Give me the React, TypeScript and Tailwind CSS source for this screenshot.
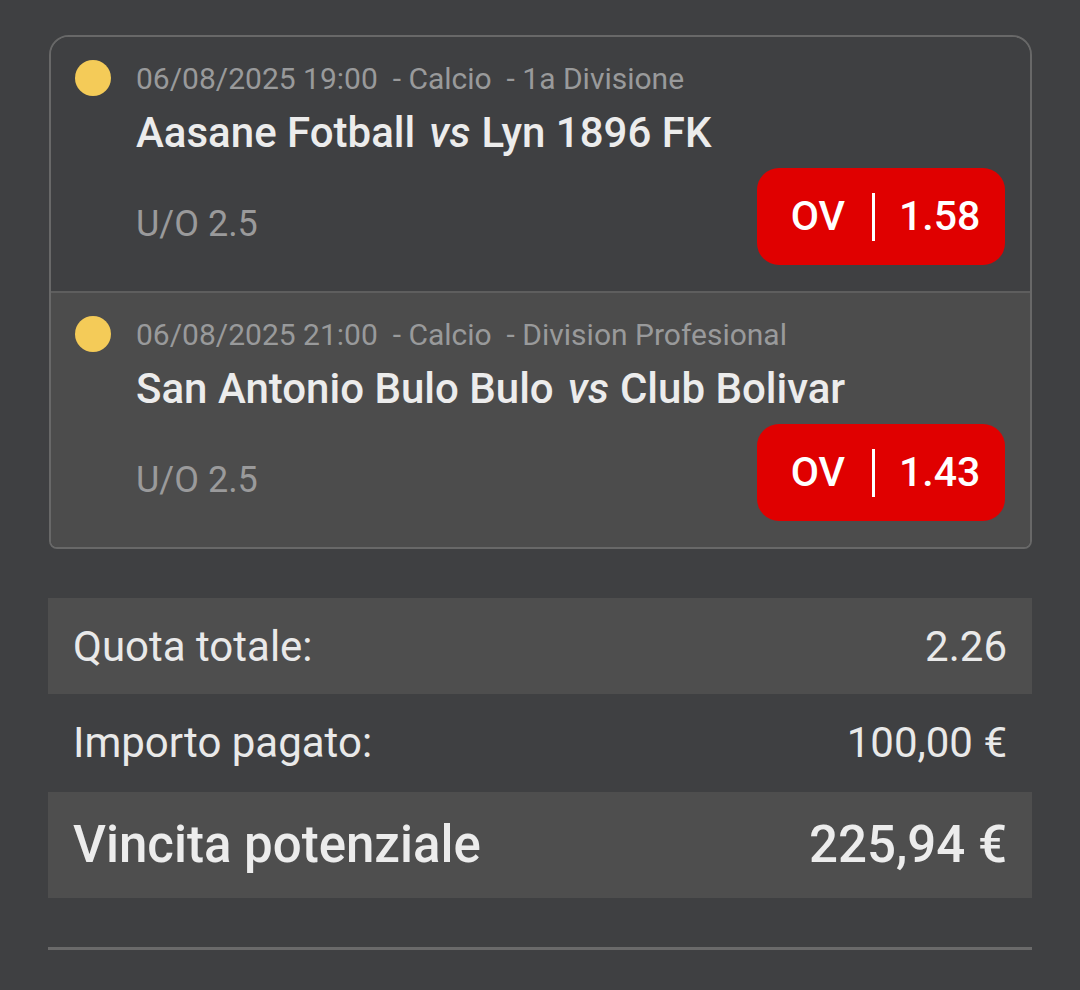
import React from "react";

type Bet = {
  date: string;
  sport: string;
  league: string;
  home: string;
  away: string;
  market: string;
  pick: string;
  odd: string;
};

const bets: Bet[] = [
  {
    date: "06/08/2025 19:00",
    sport: "Calcio",
    league: "1a Divisione",
    home: "Aasane Fotball",
    away: "Lyn 1896 FK",
    market: "U/O 2.5",
    pick: "OV",
    odd: "1.58",
  },
  {
    date: "06/08/2025 21:00",
    sport: "Calcio",
    league: "Division Profesional",
    home: "San Antonio Bulo Bulo",
    away: "Club Bolivar",
    market: "U/O 2.5",
    pick: "OV",
    odd: "1.43",
  },
];

const BetRow = ({ bet, alt }: { bet: Bet; alt: boolean }) => {
  return (
    <div
      className={`flex pl-[24px] pr-[25px] pt-[21px] pb-[26px] ${
        alt ? "bg-[#4c4c4c]" : "bg-[#3f4042]"
      }`}
    >
      <div className="flex h-[40px] w-[61px] shrink-0 items-center">
        <div className="h-[36px] w-[36px] rounded-full bg-[#f4cb58]" />
      </div>
      <div className="flex min-w-0 flex-1 flex-col">
        <div className="flex h-[40px] items-center whitespace-pre text-[30px] text-[#999a9b]">
          {bet.date}
          {"  - "}
          {bet.sport}
          {"  - "}
          {bet.league}
        </div>
        <div className="mt-[10px] flex h-[48px] items-center whitespace-pre text-[42px] font-medium text-[#ececec]">
          {bet.home}
          <span className="ml-[14px] mr-[11px] italic">vs</span>
          {bet.away}
        </div>
        <div className="mt-[12px] flex items-center justify-between">
          <div className="mt-[14px] text-[36px] text-[#9a9a9b]">{bet.market}</div>
          <div className="flex h-[97px] w-[248px] items-center justify-center rounded-[22px] bg-[#e00000] pl-[9px] text-[41px] font-medium text-white">
            <span>{bet.pick}</span>
            <span className="ml-[27px] mr-[24px] h-[48px] w-[3px] bg-white" />
            <span>{bet.odd}</span>
          </div>
        </div>
      </div>
    </div>
  );
};

const App = () => {
  return (
    <div
      className="min-h-[990px] bg-[#3f4042] px-[48px] pt-[35px]"
      style={{ fontFamily: "Roboto, 'Noto Sans', sans-serif" }}
    >
      <div className="ml-[1px] overflow-hidden rounded-t-[20px] rounded-b-[8px] border-2 border-[#686868]">
        {bets.map((bet, i) => (
          <div key={i} className={i > 0 ? "border-t-2 border-[#5e5e5e]" : ""}>
            <BetRow bet={bet} alt={i % 2 === 1} />
          </div>
        ))}
      </div>

      <div className="mt-[49px] flex flex-col">
        <div className="flex h-[96px] items-center justify-between bg-[#4e4e4e] px-[25px] text-[42px] text-[#e9e9e9]">
          <span>Quota totale:</span>
          <span>2.26</span>
        </div>
        <div className="flex h-[97px] items-center justify-between px-[25px] text-[42px] text-[#e9e9e9]">
          <span>Importo pagato:</span>
          <span>100,00 €</span>
        </div>
        <div className="mt-[1px] flex h-[106px] items-center justify-between bg-[#4e4e4e] px-[25px] text-[51px] font-medium text-[#ececec]">
          <span>Vincita potenziale</span>
          <span>225,94 €</span>
        </div>
      </div>

      <div className="mt-[49px] h-[3px] bg-[#6a6a6a]" />
    </div>
  );
};

export default App;
